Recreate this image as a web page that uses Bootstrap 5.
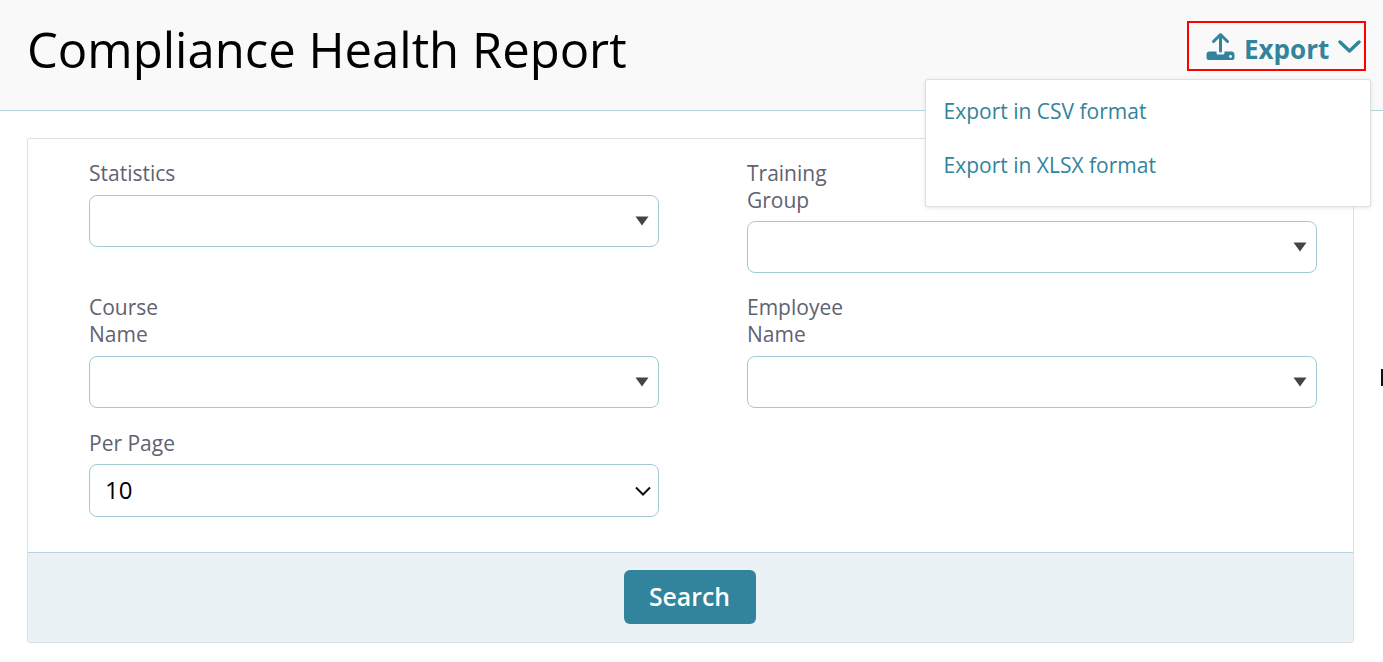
<!DOCTYPE html>
<html lang="en">
<head>
<meta charset="utf-8">
<title>Compliance Health Report</title>
<link href="https://cdn.jsdelivr.net/npm/bootstrap@5.3.0/dist/css/bootstrap.min.css" rel="stylesheet">
<style>
html,body{height:662px;overflow:hidden;background:#fff;font-family:"Open Sans",sans-serif;}
.head-bar{height:111px;background:#f9f9f9;border-bottom:1px solid #b5d4dd;padding:21px 17px 0 27px;}
.head-title{font-size:49px;font-weight:400;line-height:56px;color:#000;margin:0;}
.export-wrap{position:relative;}
.export-btn{width:179px;height:50px;border:2px solid #f00;border-radius:0;color:#31849b;font-size:26px;font-weight:700;background:transparent;padding:5px 0 0 17px;gap:9px;line-height:1;}
.export-btn:hover,.export-btn:active,.export-btn.show{color:#31849b!important;border-color:#f00!important;background:transparent!important;}
.export-icon{margin-top:-5px;}
.export-caret{margin-top:-5px;}
.export-menu.dropdown-menu{position:absolute;top:58px;right:-5px;left:auto;width:446px;height:128px;padding:5px 0;margin:0;border:1px solid #dcdfe3;border-radius:3px;box-shadow:0 1px 4px rgba(0,0,0,.1);}
.export-menu .dropdown-item{color:#31849b;font-size:21px;line-height:27px;padding:13px 18px 14px 17.5px;}
.report-card{margin:27px 29px 0 27px;height:505px;border:1px solid #dcdfe3;border-radius:3px;}
.report-form{padding:21px 36px 0 61px;height:413px;display:grid;grid-template-columns:570px 570px;column-gap:88px;align-content:start;}
.fld-a{margin-bottom:21px;}
.fld-b{margin-bottom:22px;}
.fld-label{display:block;width:112px;font-size:21px;line-height:27px;color:#5f6270;margin-bottom:8px;}
.fld-label.tight{margin-bottom:7px;}
.fld-select.form-select{height:52px;border:1px solid #a3c9d4;border-radius:8px;font-size:24px;line-height:1.2;color:#000;padding:0 36px 0 15px;background-size:auto;background-position:right 9px center;background-image:url("data:image/svg+xml,%3Csvg xmlns='http://www.w3.org/2000/svg' width='14' height='10'%3E%3Cpath fill='%23444' d='M0.5 0.5H13.5L7 9.5Z'/%3E%3C/svg%3E");}
.fld-select.plain.form-select{height:53px;background-position:right 7px center;background-image:url("data:image/svg+xml,%3Csvg xmlns='http://www.w3.org/2000/svg' width='16' height='10'%3E%3Cpath fill='none' stroke='%23111' stroke-width='2' d='M1 1.5L8 8.5L15 1.5'/%3E%3C/svg%3E");}
.report-foot{height:90px;background:#eaf2f5;border-top:1px solid #b5d4dd;padding-top:17px;padding-right:2px;}
.search-btn{width:132px;height:54px;background:#31849b;border:0;border-radius:6px;color:#fff;font-size:24.8px;font-weight:600;line-height:1;padding:0 0 1px;}
.search-btn:hover{background:#31849b;color:#fff;}
.cursor-mark{position:absolute;left:1381px;top:369px;width:2px;height:17px;background:#111;}
</style>
</head>
<body>
<header class="head-bar d-flex align-items-start justify-content-between">
  <h1 class="head-title">Compliance Health Report</h1>
  <div class="export-wrap dropdown">
    <button class="btn export-btn d-flex align-items-center show" type="button" data-bs-toggle="dropdown" aria-expanded="true">
      <svg class="export-icon" width="29" height="29" viewBox="0 0 29 29" aria-hidden="true"><path d="M14.5 19V3M7.5 9.5L14.5 2.5L21.5 9.5" fill="none" stroke="#31849b" stroke-width="3" stroke-linecap="round" stroke-linejoin="round"/><path d="M3.5 19.5H10.5V21Q10.5 22.5 12 22.5H17Q18.5 22.5 18.5 21V19.5H25.5Q28.5 19.5 28.5 23V25.5Q28.5 28 26 28H3Q.5 28 .5 25.5V22.5Q.5 19.5 3.5 19.5Z" fill="#31849b"/><circle cx="24.5" cy="24.5" r="1.4" fill="#fff"/></svg>
      <span>Export</span>
      <svg class="export-caret" width="23" height="13" viewBox="0 0 23 13" aria-hidden="true"><path d="M2 2L11.5 11L21 2" fill="none" stroke="#31849b" stroke-width="3.4" stroke-linecap="round" stroke-linejoin="round"/></svg>
    </button>
    <ul class="dropdown-menu export-menu show">
      <li><a class="dropdown-item" href="#">Export in CSV format</a></li>
      <li><a class="dropdown-item" href="#">Export in XLSX format</a></li>
    </ul>
  </div>
</header>
<main class="card report-card overflow-hidden">
  <form class="report-form">
    <div class="fld-a">
      <label class="fld-label">Statistics</label>
      <select class="form-select fld-select"><option></option></select>
    </div>
    <div class="fld-a">
      <label class="fld-label tight">Training Group</label>
      <select class="form-select fld-select"><option></option></select>
    </div>
    <div class="fld-b">
      <label class="fld-label">Course Name</label>
      <select class="form-select fld-select"><option></option></select>
    </div>
    <div class="fld-b">
      <label class="fld-label">Employee Name</label>
      <select class="form-select fld-select"><option></option></select>
    </div>
    <div>
      <label class="fld-label tight">Per Page</label>
      <select class="form-select fld-select plain"><option>10</option></select>
    </div>
  </form>
  <div class="report-foot d-flex justify-content-center align-items-start">
    <button class="btn search-btn" type="button">Search</button>
  </div>
</main>
<div class="cursor-mark"></div>
<script src="https://cdn.jsdelivr.net/npm/bootstrap@5.3.0/dist/js/bootstrap.bundle.min.js"></script>
</body>
</html>
